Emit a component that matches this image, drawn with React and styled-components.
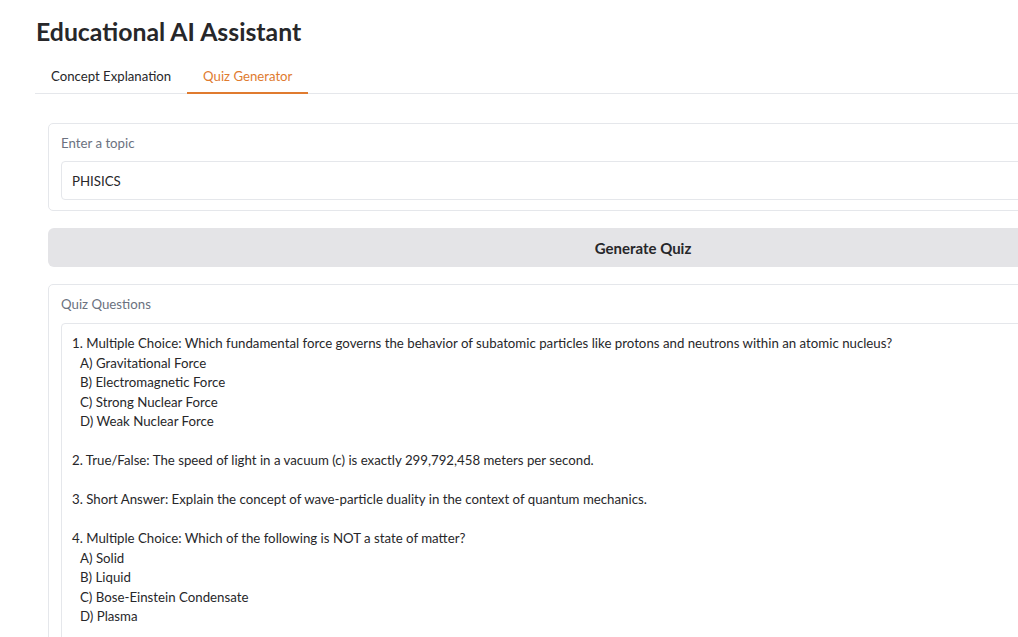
import React from "react";
import styled, { createGlobalStyle } from "styled-components";

const Global = createGlobalStyle`
  html, body { margin: 0; padding: 0; background: #ffffff; overflow: hidden; }
  body { font-family: "Lato", "Noto Sans", sans-serif; color: #27272a; }
`;

const Page = styled.div`
  width: 1216px;
  padding: 16px 0 0 35px;
`;

const Title = styled.h1`
  margin: 0 0 0 1px;
  font-size: 24.8px;
  line-height: 32px;
  font-weight: 700;
  color: #27272a;
`;

const TabBar = styled.div`
  display: flex;
  margin-top: 12px;
  border-bottom: 1px solid #e5e7eb;
`;

const Tab = styled.div`
  padding: 0 16px;
  height: 32px;
  display: flex;
  align-items: center;
  font-size: 13.2px;
  color: ${(p) => (p.$active ? "#e07b2f" : "#27272a")};
  border-bottom: 2px solid ${(p) => (p.$active ? "#e07b2f" : "transparent")};
  margin-bottom: -1px;
`;

const Content = styled.div`
  padding: 29px 13px 0 13px;
  display: flex;
  flex-direction: column;
  gap: 17px;
`;

const Panel = styled.div`
  border: 1px solid #e5e7eb;
  border-radius: 5px;
  padding: 10px 12px 10px 12px;
  display: flex;
  flex-direction: column;
  gap: 8px;
`;

const Label = styled.div`
  font-size: 13.25px;
  line-height: 19px;
  color: #6b7280;
`;

const Input = styled.div`
  border: 1px solid #e5e7eb;
  border-radius: 4px;
  height: 37px;
  padding: 0 10px;
  display: flex;
  align-items: center;
  font-size: 13.25px;
  color: #27272a;
`;

const Button = styled.button`
  height: 39px;
  border: none;
  border-radius: 6px;
  background: #e4e4e7;
  font-family: inherit;
  font-size: 15px;
  font-weight: 700;
  color: #27272a;
`;

const TextBox = styled.div`
  margin-top: 1px;
  border: 1px solid #e5e7eb;
  border-radius: 4px;
  padding: 10px 10px 12px 10px;
  font-size: 13.25px;
  line-height: 19.5px;
  color: #27272a;
`;

const Line = styled.div`
  padding-left: ${(p) => (p.$indent ? "8px" : "0")};
  min-height: 19.5px;
`;

const lines = [
  ["1. Multiple Choice: Which fundamental force governs the behavior of subatomic particles like protons and neutrons within an atomic nucleus?", false],
  ["A) Gravitational Force", true],
  ["B) Electromagnetic Force", true],
  ["C) Strong Nuclear Force", true],
  ["D) Weak Nuclear Force", true],
  ["", false],
  ["2. True/False: The speed of light in a vacuum (c) is exactly 299,792,458 meters per second.", false],
  ["", false],
  ["3. Short Answer: Explain the concept of wave-particle duality in the context of quantum mechanics.", false],
  ["", false],
  ["4. Multiple Choice: Which of the following is NOT a state of matter?", false],
  ["A) Solid", true],
  ["B) Liquid", true],
  ["C) Bose-Einstein Condensate", true],
  ["D) Plasma", true],
  ["", false],
];

export default function App() {
  return (
    <>
      <Global />
      <Page>
        <Title>Educational AI Assistant</Title>
        <TabBar>
          <Tab>Concept Explanation</Tab>
          <Tab $active>Quiz Generator</Tab>
        </TabBar>
        <Content>
          <Panel>
            <Label>Enter a topic</Label>
            <Input>PHISICS</Input>
          </Panel>
          <Button>Generate Quiz</Button>
          <Panel>
            <Label>Quiz Questions</Label>
            <TextBox>
              {lines.map(([t, ind], i) => (
                <Line key={i} $indent={ind}>{t}</Line>
              ))}
            </TextBox>
          </Panel>
        </Content>
      </Page>
    </>
  );
}
